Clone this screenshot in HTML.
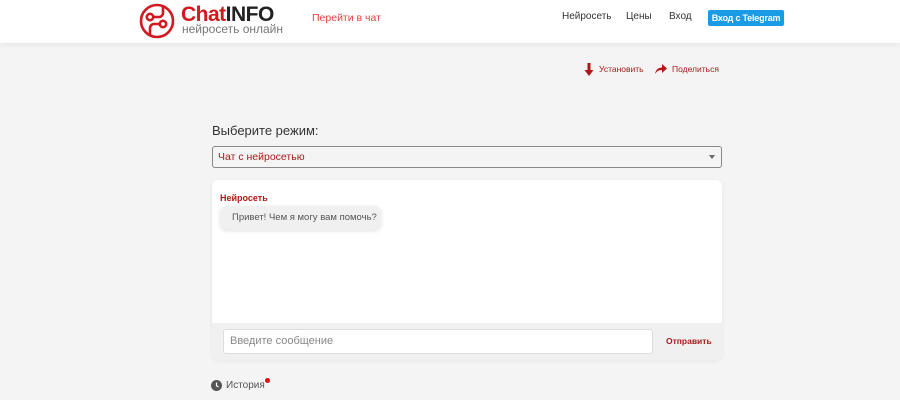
<!DOCTYPE html>
<html><head><meta charset="utf-8"><style>
*{box-sizing:border-box;margin:0;padding:0}
body{width:900px;height:400px;background:#f4f4f4;font-family:"Liberation Sans",sans-serif;position:relative;overflow:hidden}
.hdr{position:absolute;left:0;top:0;width:900px;height:43px;background:#fff;box-shadow:0 2px 6px rgba(0,0,0,.06)}
.a{position:absolute;white-space:nowrap}
</style></head><body>
<div class="hdr">
<svg class="a" style="left:139px;top:3px" width="36" height="36" viewBox="0 0 36 36" fill="none" stroke="#d3191f" stroke-width="2.6">
<circle cx="18" cy="18" r="16"/>
<circle cx="11" cy="14" r="3.2"/><circle cx="24" cy="21" r="3.2"/>
<path d="M14.2 14 H20 a4 4 0 0 0 4-4 V4"/>
<path d="M20.8 21 H15 a4 4 0 0 0-4 4 V32"/>
</svg>
<div class="a" style="left:181px;top:3px;font-size:21px;font-weight:bold;letter-spacing:-0.5px"><span style="color:#d3191f">Chat</span><span style="color:#222">INFO</span></div>
<div class="a" style="left:182px;top:22px;font-size:12px;color:#777">нейросеть онлайн</div>
<div class="a" style="left:312px;top:12px;font-size:10.5px;color:#e04040">Перейти в чат</div>
<div class="a" style="left:562px;top:11px;font-size:10px;color:#333">Нейросеть</div>
<div class="a" style="left:626px;top:11px;font-size:10px;color:#333">Цены</div>
<div class="a" style="left:669px;top:11px;font-size:10px;color:#333">Вход</div>
<div class="a" style="left:708px;top:10px;width:76px;height:16px;background:#1a9be6;border-radius:2px;color:#fff;font-size:9px;font-weight:bold;text-align:center;line-height:16px;letter-spacing:-0.2px">Вход с Telegram</div>
</div>
<svg class="a" style="left:584px;top:63px" width="10" height="13" viewBox="0 0 10 13"><path d="M3.5 0h3v7h3L5 13 0.5 7h3z" fill="#b01818"/></svg>
<div class="a" style="left:599px;top:64px;font-size:8.5px;color:#a51c1c">Установить</div>
<svg class="a" style="left:655px;top:64px" width="12" height="10" viewBox="0 0 12 10"><path d="M0 10C1 5 4 3.5 7 3.5V0l5 4.5L7 9V6C4 6 2 7 0 10z" fill="#b01818"/></svg>
<div class="a" style="left:672px;top:64px;font-size:8.5px;color:#a51c1c">Поделиться</div>
<div class="a" style="left:212px;top:123px;font-size:13px;color:#333">Выберите режим:</div>
<div class="a" style="left:212px;top:146px;width:510px;height:22px;border:1px solid #888;border-radius:3px;background:#f4f4f4"></div>
<div class="a" style="left:218px;top:151px;font-size:10.5px;color:#a51c1c">Чат с нейросетью</div>
<div class="a" style="left:709px;top:155px;width:0;height:0;border-left:3.5px solid transparent;border-right:3.5px solid transparent;border-top:4px solid #666"></div>
<div class="a" style="left:212px;top:180px;width:510px;height:180px;background:#f0f0f0;border-radius:6px;box-shadow:0 1px 4px rgba(0,0,0,.06);overflow:hidden">
<div style="height:143px;background:#fff"></div>
</div>
<div class="a" style="left:220px;top:193px;font-size:9px;font-weight:bold;color:#b01818">Нейросеть</div>
<div class="a" style="left:220px;top:206px;width:161px;height:24px;background:#f0f0f0;border-radius:7px;box-shadow:0 1px 4px rgba(0,0,0,.12);font-size:9.5px;color:#555;line-height:24px;padding-left:12px">Привет! Чем я могу вам помочь?</div>
<div class="a" style="left:223px;top:329px;width:430px;height:25px;background:#fff;border:1px solid #ddd;border-radius:3px;font-size:11px;color:#888;line-height:23px;padding-left:6px">Введите сообщение</div>
<div class="a" style="left:666px;top:336px;font-size:8.5px;font-weight:bold;color:#a51c1c">Отправить</div>
<svg class="a" style="left:211px;top:380px" width="11" height="11" viewBox="0 0 11 11"><circle cx="5.5" cy="5.5" r="5.5" fill="#555"/><path d="M5.5 2.5V5.8L7.5 7" stroke="#fff" stroke-width="1.2" fill="none"/></svg>
<div class="a" style="left:226px;top:380px;font-size:10px;color:#555">История</div>
<div class="a" style="left:265px;top:378px;width:5px;height:5px;border-radius:50%;background:#e01010"></div>
</body></html>
